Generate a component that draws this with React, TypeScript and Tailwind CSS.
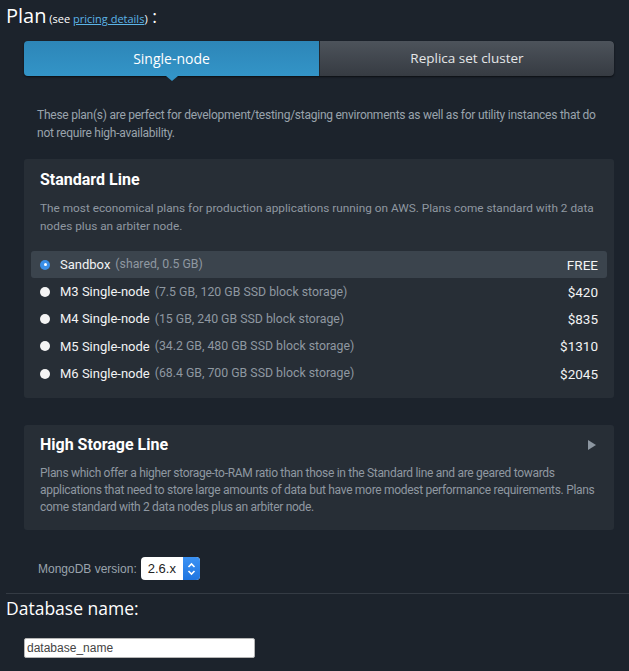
import React from 'react'

const PLANS = [
    { name: 'Sandbox', spec: '(shared, 0.5 GB)', price: 'FREE', selected: true },
    { name: 'M3 Single-node', spec: '(7.5 GB, 120 GB SSD block storage)', price: '$420' },
    { name: 'M4 Single-node', spec: '(15 GB, 240 GB SSD block storage)', price: '$835' },
    { name: 'M5 Single-node', spec: '(34.2 GB, 480 GB SSD block storage)', price: '$1310' },
    { name: 'M6 Single-node', spec: '(68.4 GB, 700 GB SSD block storage)', price: '$2045' },
]

const heading = { fontFamily: '"Open Sans", "DejaVu Sans", sans-serif' }
const body = { fontFamily: 'Roboto, "Liberation Sans", sans-serif' }
const arial = { fontFamily: '"Liberation Sans", Arial, sans-serif' }

function Radio({ checked }: { checked?: boolean }) {
    return checked ? (
        <span className="flex h-[10px] w-[10px] items-center justify-center rounded-full bg-[#3b8fe8]">
            <span className="h-[3px] w-[3px] rounded-full bg-white" />
        </span>
    ) : (
        <span className="h-[10px] w-[10px] rounded-full bg-[#f4f4f4]" />
    )
}

export default function App() {
    return (
        <div className="min-h-[671px] w-[629px] bg-[#1c232c] text-white" style={body}>
            {/* Plan */}
            <div className="px-[6px] pt-[2px]" style={heading}>
                <span className="text-[20px] leading-[28px]">Plan</span>
                <span className="text-[11px]"> (see <a className="text-[#5bb4e8] underline">pricing details</a>)</span>
                <span className="text-[18px]"> :</span>
            </div>

            {/* Tabs */}
            <div className="ml-[24px] mr-[15px] mt-[11px]">
                <div className="flex h-[35px] overflow-hidden rounded-[4px] shadow-[0_1px_2px_rgba(0,0,0,0.6)]" style={heading}>
                    <div className="flex w-[295px] items-center justify-center bg-gradient-to-b from-[#2d86b8] to-[#3394c7] text-[14px] text-white">
                        Single-node
                    </div>
                    <div className="flex flex-1 items-center justify-center rounded-r-[4px] border-l border-[#23282e] bg-gradient-to-b from-[#4d535b] to-[#363b42] text-[13.5px] text-[#e4e6e8]">
                        Replica set cluster
                    </div>
                </div>
                <div className="ml-[142px] h-0 w-0 border-x-[6px] border-t-[5px] border-x-transparent border-t-[#3394c7]" />
            </div>

            <p className="mr-[20px] mt-[25px] pl-[37px] text-[12px] leading-[18px] tracking-[-0.25px] text-[#9aa3ac]">
                These plan(s) are perfect for development/testing/staging environments as well as for utility instances that do not require high-availability.
            </p>

            {/* Standard Line */}
            <div className="ml-[24px] mr-[15px] mt-[17px] rounded-[3px] bg-[#272e36] px-[7px] pb-[11px] pt-[10px]">
                <h3 className="px-[9px] text-[16px] font-bold leading-[22px]">Standard Line</h3>
                <p className="mt-[8px] px-[9px] text-[11.8px] leading-[18px] text-[#8f98a1]">
                    The most economical plans for production applications running on AWS. Plans come standard with 2 data nodes plus an arbiter node.
                </p>
                <div className="mt-[16px]">
                    {PLANS.map((p) => (
                        <div
                            key={p.name}
                            className={`flex h-[27.25px] items-center rounded-[3px] px-[9px] text-[13px] ${p.selected ? 'bg-[#3b444d]' : ''}`}
                        >
                            <Radio checked={p.selected} />
                            <span className="ml-[10px] text-[#f2f3f4]">{p.name}</span>
                            <span className="ml-[5px] text-[12.3px] text-[#8f98a1]">{p.spec}</span>
                            <span className="ml-auto text-[13.5px] text-[#f2f3f4]">{p.price}</span>
                        </div>
                    ))}
                </div>
            </div>

            {/* High Storage Line */}
            <div className="ml-[24px] mr-[15px] mt-[27px] rounded-[3px] bg-[#272e36] px-[16px] pb-[14px] pt-[9px]">
                <div className="flex items-center">
                    <h3 className="text-[16px] font-bold leading-[22px]">High Storage Line</h3>
                    <span className="ml-auto mr-[2px] h-0 w-0 border-y-[5px] border-l-[8px] border-y-transparent border-l-[#8c96a0]" />
                </div>
                <p className="mt-[9px] text-[12px] leading-[17px] tracking-[-0.3px] text-[#8f98a1]">
                    Plans which offer a higher storage-to-RAM ratio than those in the Standard line and are geared towards applications that need to store large amounts of data but have more modest performance requirements. Plans come standard with 2 data nodes plus an arbiter node.
                </p>
            </div>

            {/* MongoDB version */}
            <div className="mt-[27px] flex items-center pl-[38px]">
                <span className="text-[12px] text-[#9aa3ac]" style={arial}>MongoDB version:</span>
                <div className="ml-[4px] flex h-[23px] overflow-hidden rounded-[4px] bg-white" style={arial}>
                    <span className="flex items-center px-[7px] text-[13px] text-[#222]">2.6.x</span>
                    <span className="flex w-[17px] items-center justify-center bg-gradient-to-b from-[#3b92f4] to-[#1f75e0]">
                        <svg width="9" height="14" viewBox="0 0 9 14" fill="none" stroke="white" strokeWidth="1.6">
                            <path d="M1.5 5 L4.5 2 L7.5 5" />
                            <path d="M1.5 9 L4.5 12 L7.5 9" />
                        </svg>
                    </span>
                </div>
            </div>

            <div className="ml-[6px] mt-[13px] border-t border-[#343b44]" />

            <h2 className="px-[6px] pt-[1px] text-[17.5px] leading-[26px]" style={heading}>Database name:</h2>

            <div className="mt-[14px] pb-[12px] pl-[24px]">
                <input
                    defaultValue="database_name"
                    className="h-[20px] w-[231px] rounded-[2px] border border-[#b5b5b5] bg-white px-[2px] text-[12px] text-[#444] outline-none"
                    style={arial}
                />
            </div>
        </div>
    )
}
